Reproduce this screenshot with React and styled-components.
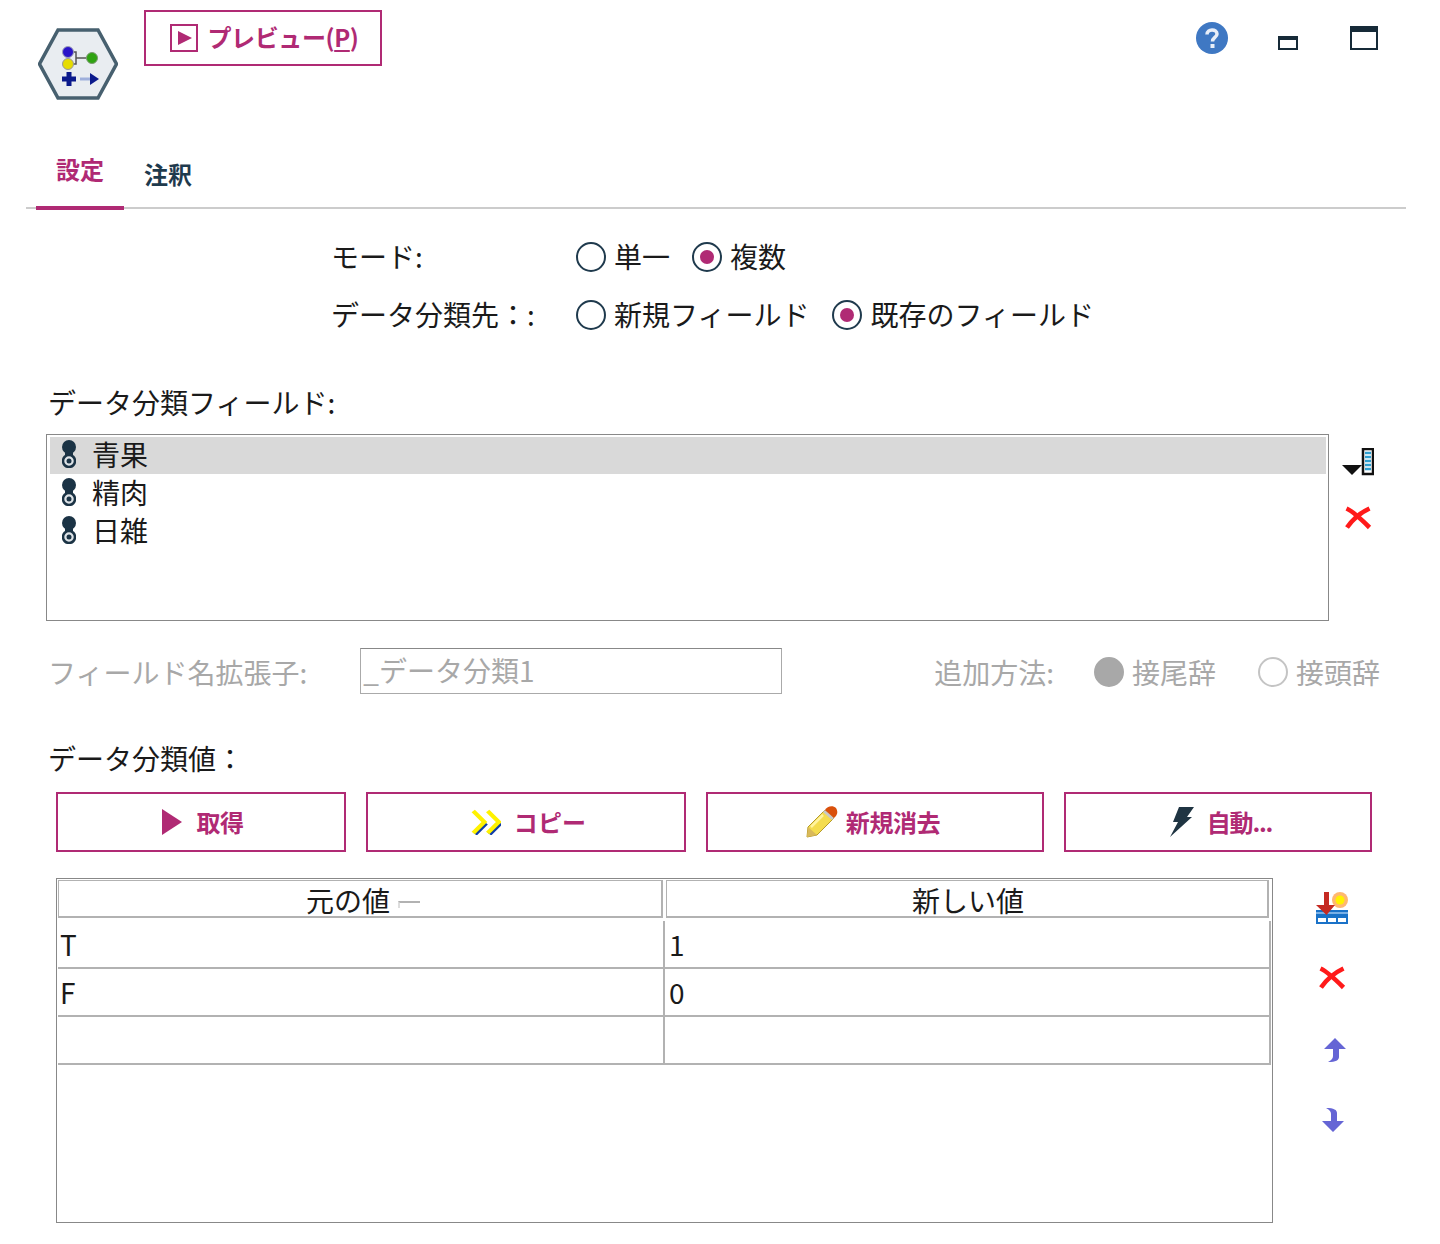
import React from "react";
import styled, { createGlobalStyle } from "styled-components";

const magenta = "#b02a74";
const ink = "#1a1a1a";
const muted = "#a8a8a8";
const rule = "#b2b2b2";

const GlobalStyle = createGlobalStyle`
  html, body { margin: 0; padding: 0; background: #fff; }
  body { font-family: "Noto Sans CJK JP", "Noto Sans", sans-serif; color: ${ink}; }
`;

const Page = styled.div`
  width: 1440px;
  height: 1244px;
  overflow: hidden;
`;

const Header = styled.header`
  display: flex;
  align-items: flex-start;
  height: 130px;
  padding: 10px 62px 0 38px;
  box-sizing: border-box;
`;

const NodeIcon = styled.svg`
  width: 80px;
  height: 72px;
  margin-top: 18px;
  flex: none;
`;

const PreviewButton = styled.button`
  display: flex;
  align-items: center;
  justify-content: center;
  gap: 10px;
  width: 238px;
  height: 56px;
  margin-left: 26px;
  background: #fff;
  border: 2px solid ${magenta};
  color: ${magenta};
  font: 700 24px "Noto Sans CJK JP", sans-serif;
  letter-spacing: -0.4px;
  padding: 0 0 0 2px;
  span { margin-top: -3px; }
  u { text-underline-offset: 3px; }
`;

const WindowIcons = styled.div`
  display: flex;
  align-items: flex-start;
  margin-left: auto;
`;

const HelpIcon = styled.svg`
  width: 32px;
  height: 32px;
  margin-top: 12px;
`;

const MinIcon = styled.div`
  width: 20px;
  height: 14px;
  margin: 26px 0 0 50px;
  box-sizing: border-box;
  border: 2px solid #162a38;
  border-top-width: 4px;
`;

const MaxIcon = styled.div`
  width: 28px;
  height: 24px;
  margin: 16px 0 0 52px;
  box-sizing: border-box;
  border: 2px solid #162a38;
  border-top-width: 6px;
`;

const Tabs = styled.nav`
  display: flex;
  align-items: flex-end;
  height: 77px;
  margin: 0 34px 0 26px;
  padding-left: 10px;
  border-bottom: 2px solid #cccccc;
`;

const Tab = styled.div`
  box-sizing: border-box;
  width: ${(p) => (p.$active ? "88px" : "auto")};
  margin-left: ${(p) => (p.$active ? "0" : "20px")};
  margin-bottom: ${(p) => (p.$active ? "-3px" : "0")};
  padding-bottom: ${(p) => (p.$active ? "19px" : "15px")};
  border-bottom: ${(p) => (p.$active ? `4px solid ${magenta}` : "none")};
  color: ${(p) => (p.$active ? magenta : "#1f3a4d")};
  font-size: 24px;
  line-height: 36px;
  font-weight: 700;
  text-align: center;
`;

const ModeGrid = styled.section`
  display: grid;
  grid-template-columns: 245px auto;
  row-gap: 16px;
  margin: 26px 0 0 331px;
`;

const Label = styled.div`
  font-size: 28px;
  line-height: 42px;
  white-space: nowrap;
  color: ${(p) => (p.$muted ? muted : ink)};
`;

const RadioGroup = styled.div`
  display: flex;
  align-items: center;
  gap: ${(p) => p.$gap}px;
  span { margin-top: 2px; }
`;

const RadioOption = styled.div`
  display: flex;
  align-items: center;
  gap: 8px;
`;

const Radio = styled.span`
  position: relative;
  display: block;
  flex: none;
  width: 30px;
  height: 30px;
  box-sizing: border-box;
  border-radius: 50%;
  border: 2px solid ${(p) => (p.$disabled ? "#c4c4c4" : "#1f3a4d")};
  background: ${(p) => (p.$fill ? muted : "#fff")};
  ${(p) => p.$fill && `border-color: ${muted};`}
  &::after {
    content: "";
    display: ${(p) => (p.$on ? "block" : "none")};
    position: absolute;
    left: 6px;
    top: 6px;
    width: 14px;
    height: 14px;
    border-radius: 50%;
    background: ${magenta};
  }
`;

const SectionLabel = styled(Label)`
  margin-left: 48px;
  margin-top: ${(p) => p.$top}px;
`;

const FieldRow = styled.section`
  display: flex;
  margin: 11px 0 0 46px;
`;

const ListBox = styled.div`
  width: 1283px;
  height: 187px;
  box-sizing: border-box;
  border: 1px solid #888;
  padding: 2px 2px 0 3px;
`;

const ListRow = styled.div`
  display: flex;
  align-items: center;
  gap: 16px;
  height: 37px;
  margin-bottom: 1px;
  box-sizing: border-box;
  padding: 0 0 3px 12px;
  background: ${(p) => (p.$selected ? "#d9d9d9" : "transparent")};
  font-size: 28px;
`;

const FlagIcon = styled.svg`
  width: 14px;
  height: 28px;
  flex: none;
`;

const SideIcons = styled.div`
  display: flex;
  flex-direction: column;
  align-items: flex-start;
  padding: ${(p) => p.$pad};
`;

const IconSvg = styled.svg`
  display: block;
  flex: none;
  margin: ${(p) => p.$m || 0};
`;

const ExtensionRow = styled.section`
  display: flex;
  align-items: center;
  box-sizing: border-box;
  height: 46px;
  margin: 27px 0 0 48px;
  padding-top: 2px;
`;

const NameInput = styled.div`
  box-sizing: border-box;
  align-self: flex-start;
  flex: none;
  width: 422px;
  height: 46px;
  margin: -2px 0 0 53px;
  padding: 0 2px;
  border: 1px solid #aaa;
  border-top-color: #888;
  color: ${muted};
  font-size: 28px;
  line-height: 42px;
`;

const AddMethod = styled.div`
  display: flex;
  align-items: center;
  margin-left: 152px;
  gap: 40px;
  & > :last-child { margin-left: 2px; }
`;

const ButtonRow = styled.section`
  display: flex;
  gap: 20px;
  margin: 13px 0 0 56px;
`;

const ActionButton = styled.button`
  display: flex;
  align-items: center;
  justify-content: center;
  gap: ${(p) => p.$gap}px;
  width: ${(p) => p.$w}px;
  height: 60px;
  padding: 0 ${(p) => p.$right || 0}px 0 ${(p) => p.$left || 0}px;
  background: #fff;
  border: 2px solid ${magenta};
  color: ${magenta};
  font: 700 24px "Noto Sans CJK JP", sans-serif;
  letter-spacing: ${(p) => p.$spacing || "-0.4px"};
  span { margin-top: -2px; }
`;

const TableRow = styled.section`
  display: flex;
  margin: 26px 0 0 56px;
`;

const TableBox = styled.div`
  width: 1217px;
  height: 345px;
  box-sizing: border-box;
  border: 1px solid #888;
  padding: 1px 0 0 1px;
`;

const HeaderCells = styled.div`
  display: grid;
  grid-template-columns: 605px 603px;
  column-gap: 3px;
`;

const HeaderCell = styled.div`
  box-sizing: border-box;
  height: 38px;
  padding-left: ${(p) => p.$left}px;
  border: 1px solid ${rule};
  border-right-width: 2px;
  border-bottom-width: 2px;
  font-size: 28px;
  line-height: 38px;
  text-align: center;
`;

const SortMark = styled.span`
  display: inline-block;
  width: 22px;
  height: 7px;
  margin-left: 8px;
  vertical-align: 4px;
  box-sizing: border-box;
  border-top: 2px solid ${rule};
  border-left: 2px solid #ddd;
`;

const BodyRows = styled.div`
  width: 1213px;
  margin-top: 3px;
  box-sizing: border-box;
  border-right: 2px solid ${rule};
`;

const DataRow = styled.div`
  display: grid;
  grid-template-columns: 605px 1fr;
  box-sizing: border-box;
  height: 48px;
  border-bottom: 2px solid ${rule};
`;

const DataCell = styled.div`
  padding-left: ${(p) => p.$pad}px;
  font-size: 28px;
  line-height: 46px;
  & + & { border-left: 2px solid ${rule}; }
`;

const NodeGlyph = () => (
  <NodeIcon viewBox="0 0 80 72">
    <polygon points="1.500,36 20,2 60,2 78.500,36 60,70 20,70" fill="#e9edf1" stroke="#47606f" strokeWidth="3.500" />
    <path d="M30 24H38V36H30M38 30H48" fill="none" stroke="#555" strokeWidth="1.500" />
    <circle cx="30" cy="24" r="5.500" fill="#2a14c8" stroke="#9a9db8" />
    <circle cx="30" cy="36" r="5.500" fill="#e6dc00" stroke="#999" />
    <circle cx="54" cy="30" r="5.500" fill="#2fa312" stroke="#7a9a70" />
    <path d="M31 44V58M24 51H38" stroke="#0b1a8c" strokeWidth="5" />
    <path d="M42 51H54" stroke="#9fb0dc" strokeWidth="3" />
    <path d="M52 45L61 51L52 57Z" fill="#0b1a8c" />
  </NodeIcon>
);

const CloseGlyph = ({ m }) => (
  <IconSvg width="28" height="24" viewBox="0 0 28 24" $m={m}>
    <path d="M2.500 2.500C8 5 16 12 25.500 21.500M25.500 2.500C18 6 9 13 3 21.500" fill="none" stroke="#ff1a1a" strokeWidth="4.600" />
  </IconSvg>
);

const Flag = () => (
  <FlagIcon viewBox="0 0 14 28">
    <circle cx="7" cy="7" r="7" fill="#1b3345" />
    <rect x="3" y="12" width="8" height="4" fill="#1b3345" />
    <circle cx="7" cy="21" r="6" fill="#dfe4e8" stroke="#1b3345" strokeWidth="2.500" />
    <circle cx="7" cy="21" r="2.500" fill="#1b3345" />
  </FlagIcon>
);

const fields = ["青果", "精肉", "日雑"];

export default function App() {
  return (
    <Page>
      <GlobalStyle />
      <Header>
        <NodeGlyph />
        <PreviewButton>
          <svg width="28" height="28" viewBox="0 0 28 28">
            <rect x="1" y="1" width="26" height="26" fill="none" stroke={magenta} strokeWidth="2" />
            <path d="M8 7L22 14L8 21Z" fill={magenta} />
          </svg>
          <span>プレビュー(<u>P</u>)</span>
        </PreviewButton>
        <WindowIcons>
          <HelpIcon viewBox="0 0 32 32">
            <circle cx="16" cy="16" r="16" fill="#3f78c3" />
            <path d="M11 12.500C11 6.500 21 6.500 21 12C21 15.500 16.500 15.500 16.500 19.500" fill="none" stroke="#e8eef8" strokeWidth="3.500" />
            <rect x="14.500" y="22" width="4" height="4" fill="#e8eef8" />
          </HelpIcon>
          <MinIcon />
          <MaxIcon />
        </WindowIcons>
      </Header>

      <Tabs>
        <Tab $active>設定</Tab>
        <Tab>注釈</Tab>
      </Tabs>

      <ModeGrid>
        <Label>モード:</Label>
        <RadioGroup $gap={22}>
          <RadioOption><Radio /><Label>単一</Label></RadioOption>
          <RadioOption><Radio $on /><Label>複数</Label></RadioOption>
        </RadioGroup>
        <Label>データ分類先：:</Label>
        <RadioGroup $gap={23}>
          <RadioOption><Radio /><Label>新規フィールド</Label></RadioOption>
          <RadioOption><Radio $on /><Label>既存のフィールド</Label></RadioOption>
        </RadioGroup>
      </ModeGrid>

      <SectionLabel $top={46}>データ分類フィールド:</SectionLabel>
      <FieldRow>
        <ListBox>
          {fields.map((name, i) => (
            <ListRow key={name} $selected={i === 0}>
              <Flag />
              <span>{name}</span>
            </ListRow>
          ))}
        </ListBox>
        <SideIcons $pad="14px 0 0 13px">
          <IconSvg width="32" height="28" viewBox="0 0 32 28">
            <rect x="21" y="1" width="10" height="25" fill="#fff" stroke="#111" strokeWidth="2.500" />
            <path d="M23 5H29M23 9H29M23 13H29M23 17H29M23 21H29" stroke="#2f9fd0" strokeWidth="2.500" />
            <path d="M0 17H20L10 27Z" fill="#111" />
          </IconSvg>
          <CloseGlyph m="30px 0 0 2px" />
        </SideIcons>
      </FieldRow>

      <ExtensionRow>
        <Label $muted>フィールド名拡張子:</Label>
        <NameInput>_データ分類1</NameInput>
        <AddMethod>
          <Label $muted>追加方法:</Label>
          <RadioOption><Radio $fill /><Label $muted>接尾辞</Label></RadioOption>
          <RadioOption><Radio $disabled /><Label $muted>接頭辞</Label></RadioOption>
        </AddMethod>
      </ExtensionRow>

      <SectionLabel $top={43}>データ分類値：</SectionLabel>
      <ButtonRow>
        <ActionButton $w={290} $gap={14} $left={4}>
          <svg width="20" height="26" viewBox="0 0 20 26"><path d="M0 0L20 13L0 26Z" fill={magenta} /></svg>
          <span>取得</span>
        </ActionButton>
        <ActionButton $w={320} $gap={13} $left={5} $spacing="0.2px">
          <svg width="30" height="26" viewBox="0 0 27 26" preserveAspectRatio="none">
            <path d="M12 13L2 24M25 13L15 24" fill="none" stroke="#0f3ea8" strokeWidth="4.500" transform="translate(1.500 1)" />
            <path d="M2 2L12 13L2 24M15 2L25 13L15 24" fill="none" stroke="#fff200" strokeWidth="4" />
          </svg>
          <span>コピー</span>
        </ActionButton>
        <ActionButton $w={338} $gap={8} $right={4}>
          <svg width="32" height="32" viewBox="0 0 32 32">
            <path d="M1 31L2 21L19 4L28 12L11 29Z" fill="#f4dc4e" stroke="#b59a2a" strokeWidth="1" />
            <path d="M5 21L17 9" stroke="#fff3a0" strokeWidth="2.500" />
            <path d="M2 21L11 29L1 31Z" fill="#d9b95a" />
            <path d="M17 6L26 14L28 12L19 4Z" fill="#c8c8c8" />
            <path d="M19 4C21 0 27 -1 30 2C32 5 32 9 28 12Z" fill="#d9500c" />
          </svg>
          <span>新規消去</span>
        </ActionButton>
        <ActionButton $w={308} $gap={13} $left={6} $spacing="-1.2px">
          <svg width="24" height="30" viewBox="0 0 24 30">
            <path d="M9 0H24L17 10H22L0 30L8 15H3Z" fill="#1f3442" />
          </svg>
          <span>自動...</span>
        </ActionButton>
      </ButtonRow>

      <TableRow>
        <TableBox>
          <HeaderCells>
            <HeaderCell $left={6}>元の値<SortMark /></HeaderCell>
            <HeaderCell $left={2}>新しい値</HeaderCell>
          </HeaderCells>
          <BodyRows>
            <DataRow>
              <DataCell $pad={2}>T</DataCell>
              <DataCell $pad={4}>1</DataCell>
            </DataRow>
            <DataRow>
              <DataCell $pad={2}>F</DataCell>
              <DataCell $pad={4}>0</DataCell>
            </DataRow>
            <DataRow>
              <DataCell />
              <DataCell />
            </DataRow>
          </BodyRows>
        </TableBox>
        <SideIcons $pad="14px 0 0 43px">
          <IconSvg width="32" height="32" viewBox="0 0 32 32">
            <circle cx="24" cy="8" r="8" fill="#ffb870" />
            <circle cx="24" cy="8" r="4.500" fill="#fff200" />
            <rect y="18" width="32" height="14" fill="#1a72c8" />
            <rect y="20" width="32" height="2" fill="#79b0e6" />
            <path d="M2 26H10V30H2ZM12 26H20V30H12ZM22 26H30V30H22Z" fill="#fff" />
            <path d="M8 0H13V13H19L10.500 23L0 13H8Z" fill="#c52a22" />
          </IconSvg>
          <CloseGlyph m="42px 0 0 2px" />
          <IconSvg width="22" height="24" viewBox="0 0 22 24" $m="48px 0 0 8px">
            <path d="M11 0L22 11H15V19C15 22 12 24 4 24C8 22 9 20 9 18V11H0Z" fill="#6565d5" />
          </IconSvg>
          <IconSvg width="22" height="24" viewBox="0 0 22 24" $m="46px 0 0 6px">
            <path d="M11 24L22 13H15V5C15 2 12 0 4 0C8 2 9 4 9 6V13H0Z" fill="#6565d5" />
          </IconSvg>
        </SideIcons>
      </TableRow>
    </Page>
  );
}
